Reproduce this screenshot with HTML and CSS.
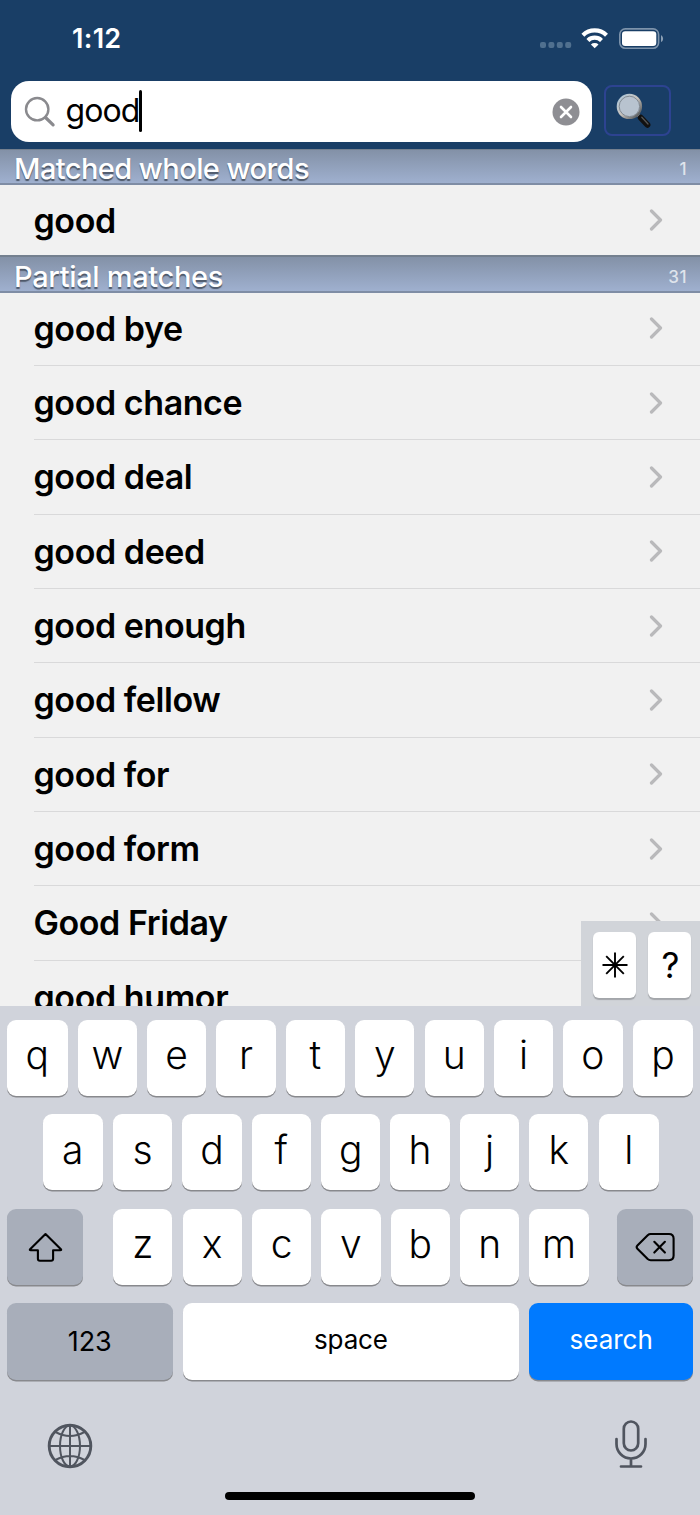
FILE: index.html
```html
<!DOCTYPE html>
<html lang="en">
<head>
<meta charset="utf-8">
<title>Dictionary search</title>
<link rel="stylesheet" href="styles.css">
</head>
<body>
<div class="screen">
  <header class="top">
    <div class="status">
      <span class="time">1:12</span>
      <svg class="status-icons" width="124" height="24" viewBox="0 0 124 24">
        <g fill="#50708f"><rect x="0" y="14" width="6" height="6" rx="2"/><rect x="8.400" y="14" width="6" height="6" rx="2"/><rect x="16.800" y="14" width="6" height="6" rx="2"/><rect x="25.200" y="14" width="6" height="6" rx="2"/></g>
        <g fill="none" stroke="#fff" stroke-width="4.200"><path d="M42.900 7.200a16.900 16.900 0 0 1 23.600 0"/><path d="M47.900 12.400a9.800 9.800 0 0 1 13.600 0"/></g>
        <path fill="#fff" d="M50.900 16.500a5.600 5.600 0 0 1 7.600 0L54.700 20.300z"/>
        <rect x="79.800" y="0.900" width="38.800" height="19.400" rx="5.500" fill="none" stroke="#7d93ab" stroke-width="1.600"/>
        <rect x="82" y="3.200" width="34.300" height="14.800" rx="3.200" fill="#fff"/>
        <path fill="#8b9fb4" d="M121 7.200c2.800 1.200 2.800 5.700 0 6.900z"/>
      </svg>
    </div>
    <div class="search-row">
      <div class="field">
        <svg class="lens" width="32" height="32" viewBox="0 0 32 32" fill="none" stroke="#8a8a8e" stroke-linecap="round"><circle cx="13.200" cy="13.200" r="11.200" stroke-width="2.400"/><path d="M21.500 21.500l7.600 7.400" stroke-width="3.200"/></svg>
        <span class="query">good</span><span class="caret"></span>
        <svg class="clear" width="28" height="28" viewBox="0 0 28 28"><circle cx="14" cy="14" r="13.500" fill="#8e8e93"/><path d="M9 9l10 10M19 9L9 19" stroke="#fff" stroke-width="2.600" stroke-linecap="round"/></svg>
      </div>
      <div class="go">
        <svg width="38" height="38" viewBox="0 0 38 38">
          <defs>
            <linearGradient id="rim" x1="0" y1="0" x2="1" y2="1"><stop offset="0" stop-color="#a9c6dc"/><stop offset=".5" stop-color="#c8c3bd"/><stop offset="1" stop-color="#3e4347"/></linearGradient>
          </defs>
          <path d="M21.500 21.500l4 4" stroke="#999" stroke-width="3"/>
          <path d="M24.800 24.800l6.600 7" stroke="#111" stroke-width="6" stroke-linecap="round"/>
          <path d="M25.800 24.200l6.200 6.800" stroke="#555" stroke-width="1.300" stroke-linecap="round"/>
          <circle cx="13.400" cy="13.400" r="11.600" fill="#b8c3cf" stroke="url(#rim)" stroke-width="2.200"/>
          <circle cx="13.400" cy="13.400" r="10.200" fill="none" stroke="#737b83" stroke-width=".8"/>
        </svg>
      </div>
    </div>
  </header>

  <main class="results">
    <div class="section first"><span class="section-name whole">Matched whole words</span><span class="count">1</span></div>
    <div class="row single"><span>good</span><svg class="chev" viewBox="0 0 14 22"><path d="M2.500 2l9 9-9 9"/></svg></div>
    <div class="section"><span class="section-name">Partial matches</span><span class="count">31</span></div>
    <div class="list">
      <div class="row"><span>good bye</span><svg class="chev" viewBox="0 0 14 22"><path d="M2.500 2l9 9-9 9"/></svg></div>
      <div class="row"><span>good chance</span><svg class="chev" viewBox="0 0 14 22"><path d="M2.500 2l9 9-9 9"/></svg></div>
      <div class="row"><span>good deal</span><svg class="chev" viewBox="0 0 14 22"><path d="M2.500 2l9 9-9 9"/></svg></div>
      <div class="row"><span>good deed</span><svg class="chev" viewBox="0 0 14 22"><path d="M2.500 2l9 9-9 9"/></svg></div>
      <div class="row"><span>good enough</span><svg class="chev" viewBox="0 0 14 22"><path d="M2.500 2l9 9-9 9"/></svg></div>
      <div class="row"><span>good fellow</span><svg class="chev" viewBox="0 0 14 22"><path d="M2.500 2l9 9-9 9"/></svg></div>
      <div class="row"><span>good for</span><svg class="chev" viewBox="0 0 14 22"><path d="M2.500 2l9 9-9 9"/></svg></div>
      <div class="row"><span>good form</span><svg class="chev" viewBox="0 0 14 22"><path d="M2.500 2l9 9-9 9"/></svg></div>
      <div class="row"><span>Good Friday</span><svg class="chev" viewBox="0 0 14 22"><path d="M2.500 2l9 9-9 9"/></svg></div>
      <div class="row"><span>good humor</span></div>
    </div>
    <div class="wildcards">
      <div class="wild"><svg width="26" height="26" viewBox="0 0 26 26" stroke="#000" stroke-width="1.900"><path d="M13 .5v25M.5 13h25M4.200 4.200l17.600 17.600M21.800 4.200L4.200 21.800"/><circle cx="13" cy="13" r="2" fill="#000" stroke="none"/></svg></div>
      <div class="wild question">?</div>
    </div>
  </main>

  <section class="keyboard">
    <div class="keys r1"><b>q</b><b>w</b><b>e</b><b>r</b><b>t</b><b>y</b><b>u</b><b>i</b><b>o</b><b>p</b></div>
    <div class="keys r2"><b>a</b><b>s</b><b>d</b><b>f</b><b>g</b><b>h</b><b>j</b><b>k</b><b>l</b></div>
    <div class="keys r3">
      <div class="key-alt"><svg width="36" height="32" viewBox="0 0 36 32" fill="none" stroke="#000" stroke-width="2.100" stroke-linejoin="round"><path d="M18.500 3L3.100 18.200q-.8 1.100.6 1.100h7.200v8.500q0 2 2 2h11.200q2 0 2-2v-8.500h7.200q1.400 0 .6-1.100z"/></svg></div>
      <b>z</b><b>x</b><b>c</b><b>v</b><b>b</b><b>n</b><b>m</b>
      <div class="key-alt"><svg width="40" height="30" viewBox="0 0 40 30" fill="none" stroke="#000" stroke-width="2.100" stroke-linejoin="round" stroke-linecap="round"><path d="M15.700 2H34q4.600 0 4.600 4.600v17q0 4.600-4.600 4.600H15.700q-1.700 0-3-1.200L2.400 16.700q-1.600-1.600 0-3.200L12.700 3.200Q14 2 15.700 2z"/><path d="M19.300 9.800l10.600 10.800M29.900 9.800L19.300 20.600"/></svg></div>
    </div>
    <div class="keys r4"><div class="key-alt num">123</div><div class="space">space</div><div class="enter">search</div></div>
    <div class="tools">
      <svg width="46" height="46" viewBox="0 0 46 46" fill="none" stroke="#50555f"><circle cx="23" cy="23" r="20.800" stroke-width="2.900"/><g stroke-width="2"><ellipse cx="23" cy="23" rx="10" ry="20.500"/><path d="M23 2v42M2 23h42M8.500 9q14.500 8 29 0M8.500 37q14.500-8 29 0"/></g></svg>
      <svg width="34" height="50" viewBox="0 0 34 50" fill="none" stroke="#50555f" stroke-width="2.700" stroke-linecap="round"><rect x="9.800" y="1.500" width="14.400" height="29" rx="7.200"/><path d="M2.500 19v5a14.500 14.500 0 0 0 29 0v-5M17 38.500v8M7 46.500h20"/></svg>
    </div>
    <div class="home"></div>
  </section>
</div>
</body>
</html>
```
FILE: styles.css
```css
* { box-sizing: border-box; }
body { margin: 0; font-family: Inter, "Liberation Sans", sans-serif; }
svg { display: block; flex: none; }
.screen { width: 700px; height: 1515px; overflow: hidden; background: #f1f1f1; display: flex; flex-direction: column; }
.top { height: 149px; flex: none; background: #193e66; }
.status { height: 81px; padding: 28px 36px 0 72px; display: flex; justify-content: space-between; }
.time { font-size: 27px; font-weight: 600; line-height: 22px; color: #fff; letter-spacing: 0.3px; }
.search-row { display: flex; padding-left: 10.500px; gap: 12px; }
.field { width: 581.500px; height: 61px; border-radius: 18px; background: #fff; display: flex; align-items: center; padding: 0 12px 0 13px; }
.query { font-size: 32px; margin-left: 10px; letter-spacing: -0.900px; line-height: 56px; padding-bottom: 2px; }
.caret { width: 3.500px; height: 42px; background: #000; border-radius: 2px; margin-left: -1px; margin-top: -2px; }
.clear { margin-left: auto; }
.go { width: 67px; height: 51px; margin-top: 4px; border: 2px solid #2d4391; border-radius: 8px; padding: 6px 0 0 10px; }

.results { height: 857px; flex: none; position: relative; overflow: hidden; }
.section { height: 38px; display: flex; align-items: center; justify-content: space-between; padding: 5px 13px 0 14px; border-top: 2px solid #74808f; border-bottom: 2px solid #7f8da5; background: linear-gradient(#8391a7, #9fb0cf); color: #fff; }
.section.first { height: 36px; border-top-width: 1px; padding-top: 4px; }
.section-name { font-size: 29px; font-weight: 500; letter-spacing: -0.330px; line-height: 30px; text-shadow: 0 2px 1px #4d5869; }
.section-name.whole { letter-spacing: -0.570px; }
.count { font-size: 17px; font-weight: 500; color: #dfe4ec; letter-spacing: 0.500px; }
.row { height: 74.350px; display: flex; align-items: center; justify-content: space-between; margin-left: 34px; padding-right: 37px; border-bottom: 1.500px solid #d9d9da; font-size: 34px; font-weight: 600; letter-spacing: -0.420px; }
.row span { margin-left: -0.500px; }
.row.single { height: 70px; border: 0; }
.list { margin-top: -1.500px; }
.chev { width: 14px; height: 22px; fill: none; stroke: #b9b9bb; stroke-width: 3.200; stroke-linecap: round; stroke-linejoin: round; }
.wildcards { position: absolute; right: 0; bottom: 0; width: 119px; height: 85px; background: #d1d4d9; padding: 11px 9px 0 12px; display: flex; gap: 12px; }
.wild { width: 43px; height: 66px; background: #fff; border-radius: 6px; box-shadow: 0 1.500px 1px #a3a6aa; display: flex; align-items: center; justify-content: center; font-size: 35px; font-weight: 400; }
.question { padding-left: 2px; }

.keyboard { height: 509px; flex: none; background: #d0d3db; padding: 13.500px 7px 0; }
.keys { display: flex; gap: 10.200px; height: 76.300px; margin-bottom: 18.300px; }
.keys > * { border-radius: 9px; background: #fff; box-shadow: 0 1.500px 0 #88898d; display: flex; align-items: center; justify-content: center; }
.keys b { flex: 0 0 59.200px; font-size: 39px; font-weight: 350; padding-bottom: 6px; }
.keys.r1 b:first-child, .keys.r1 b:last-child { flex-basis: 60.500px; }
.r2 { padding: 0 34.500px 0 35.500px; }
.keys.r2 b:first-child, .keys.r2 b:last-child { flex-basis: 60.300px; }
.keys > .key-alt { background: #a8aeba; width: 76px; }
.r3 .key-alt:first-child { margin-right: 20px; }
.r3 .key-alt:last-child { margin-left: auto; }
.r4 { font-size: 26px; }
.keys > .num { width: 165.500px; font-size: 27px; }
.keys > .space { width: 336.500px; padding-bottom: 4px; letter-spacing: -0.150px; }
.keys > .enter { flex: 1; background: #007aff; color: #fff; padding-bottom: 4px; }
.tools { display: flex; justify-content: space-between; padding: 22px 45px 0 40px; align-items: center; }
.tools svg:first-child { margin-top: 2px; }
.home { width: 250px; height: 8px; border-radius: 4px; background: #000; margin: 22.500px auto 0; }
```
